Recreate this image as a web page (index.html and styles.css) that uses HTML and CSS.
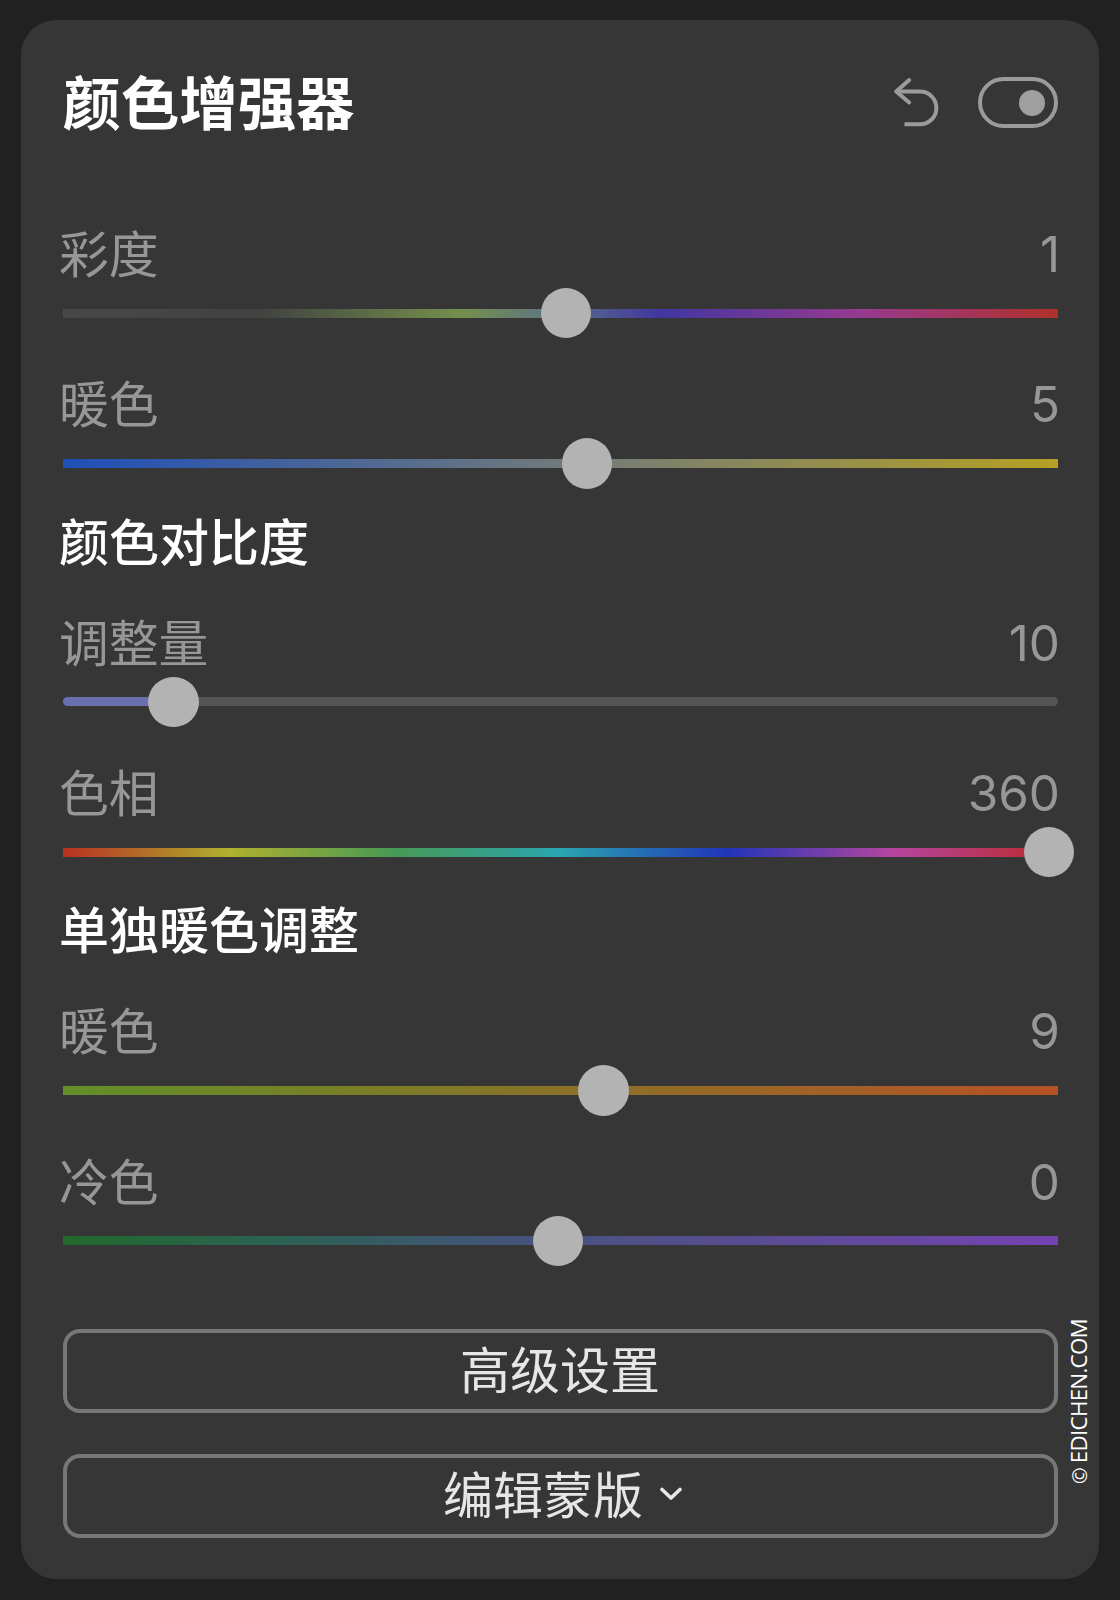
FILE: index.html
```html
<!DOCTYPE html>
<html lang="zh-CN">
<head>
<meta charset="utf-8">
<title>颜色增强器</title>
<link rel="stylesheet" href="styles.css">
</head>
<body>
<main class="panel">
  <header class="header">
    <h1 class="title">颜色增强器</h1>
    <div class="actions">
      <svg class="undo" width="48" height="52" viewBox="0 0 48 52" fill="none" stroke="#9b9b9b" stroke-width="4" stroke-linecap="round" stroke-linejoin="round"><path d="M17.2 3 4.2 14.5 17.2 25.5" /><path d="M5 14.5H28A16.4 16.4 0 0 1 28 47.3H12.5" stroke-linecap="butt"/></svg>
      <span class="toggle"><span class="toggle-dot"></span></span>
    </div>
  </header>

  <section class="sliders">
    <div class="slider">
      <div class="caption"><span class="name">彩度</span><span class="value">1</span></div>
      <div class="rail"><div class="track track-chroma"></div><span class="knob" style="left:50.6%"></span></div>
    </div>
    <div class="slider">
      <div class="caption"><span class="name">暖色</span><span class="value">5</span></div>
      <div class="rail"><div class="track track-warmth"></div><span class="knob" style="left:52.7%"></span></div>
    </div>
  </section>

  <h2 class="subtitle">颜色对比度</h2>
  <section class="sliders">
    <div class="slider">
      <div class="caption"><span class="name">调整量</span><span class="value">10</span></div>
      <div class="rail"><div class="track track-amount"></div><span class="knob" style="left:11.15%"></span></div>
    </div>
    <div class="slider">
      <div class="caption"><span class="name">色相</span><span class="value">360</span></div>
      <div class="rail"><div class="track track-hue"></div><span class="knob" style="left:99.15%"></span></div>
    </div>
  </section>

  <h2 class="subtitle">单独暖色调整</h2>
  <section class="sliders">
    <div class="slider">
      <div class="caption"><span class="name">暖色</span><span class="value">9</span></div>
      <div class="rail"><div class="track track-warm"></div><span class="knob" style="left:54.4%"></span></div>
    </div>
    <div class="slider">
      <div class="caption"><span class="name">冷色</span><span class="value">0</span></div>
      <div class="rail"><div class="track track-cool"></div><span class="knob" style="left:49.8%"></span></div>
    </div>
  </section>

  <div class="buttons">
    <button class="button">高级设置</button>
    <button class="button button-menu">编辑蒙版<svg class="chevron" width="24" height="16" viewBox="0 0 24 16" fill="none" stroke="#e6e6e6" stroke-width="3.7" stroke-linecap="round" stroke-linejoin="round"><path d="M3 3.5 12 12 21 3.5"/></svg></button>
  </div>
  <span class="watermark"><span class="copyright">©</span> EDICHEN.COM</span>
</main>
</body>
</html>
```
FILE: styles.css
```css
* { box-sizing: border-box; }

body {
  margin: 0;
  height: 1600px;
  padding: 20px 21px 21px;
  background: #212121;
  font-family: "Noto Sans CJK SC", sans-serif;
  overflow: hidden;
}

.panel {
  position: relative;
  height: 1559px;
  padding: 50px 41.5px 0;
  border-radius: 35px;
  background: #363636;
}

.header {
  display: flex;
  justify-content: space-between;
  align-items: center;
  height: 65px;
}

.title {
  margin: 0;
  padding-bottom: 5px;
  font-size: 58.4px;
  line-height: 60px;
  font-weight: 700;
  color: #fff;
}

.actions { display: flex; align-items: center; gap: 38px; }
.undo { display: block; }

.toggle {
  display: flex;
  align-items: center;
  justify-content: flex-end;
  width: 80px;
  height: 51px;
  padding-right: 9px;
  border: 4px solid #9b9b9b;
  border-radius: 26px;
}
.toggle-dot { width: 26px; height: 26px; border-radius: 50%; background: #9f9f9f; }

.sliders { display: flex; flex-direction: column; gap: 35.4px; }
.header + .sliders { margin-top: 88px; }

.caption {
  display: flex;
  justify-content: space-between;
  height: 60px;
  margin: 0 -2.5px 5px -3.5px;
  color: #979797;
}
.name { font-size: 49.8px; line-height: 56px; font-weight: 400; }
.value { font-family: Inter, sans-serif; font-size: 49.4px; line-height: 62px; font-weight: 400; }

.rail { position: relative; display: flex; align-items: center; height: 50px; }
.track { width: 100%; height: 9px; }
.knob {
  position: absolute;
  top: -0.2px;
  width: 50.6px;
  height: 50.6px;
  margin-left: -25.3px;
  border-radius: 50%;
  background: #b3b3b3;
}

.track-chroma { background: linear-gradient(90deg, #484848, #414340 20%, #75904d 40%, #5b7088 50%, #4136a0 60%, #973a90 80%, #b0302a); }
.track-warmth { background: linear-gradient(90deg, #1f4fb8, #707a7c 50%, #b5a024); }
.track-amount { border-radius: 5px; background: linear-gradient(90deg, #6a6fb0 11%, #535454 11%); }
.track-hue { background: linear-gradient(90deg, #b82f22, #b0b02e 16.7%, #479a55 33.3%, #2aa5b0 50%, #2035b8 66.7%, #b445a0 83.3%, #bc2a28); }
.track-warm { background: linear-gradient(90deg, #628f2a, #8a7228 50%, #b65224); }
.track-cool { background: linear-gradient(90deg, #22692c, #2a6350 20%, #44547a 45%, #7543b2); }

.subtitle {
  height: 60px;
  margin: 23.3px 0 40px -3.5px;
  font-size: 50px;
  line-height: 55px;
  font-weight: 500;
  color: #fff;
}

.buttons { display: flex; flex-direction: column; gap: 41px; margin-top: 63px; }
.button {
  display: flex;
  align-items: center;
  justify-content: center;
  height: 84px;
  padding: 0 0 8px;
  border: 4px solid #777;
  border-radius: 17px;
  background: transparent;
  font: 400 50px/60px "Noto Sans CJK SC", sans-serif;
  color: #e6e6e6;
}
.button-menu { padding-left: 6px; }
.chevron { margin: 5px 0 0 16px; }

.watermark {
  position: absolute;
  right: 4px;
  top: 1299px;
  writing-mode: vertical-rl;
  text-orientation: sideways;
  transform: rotate(180deg);
  font: 400 22.4px/30px "Open Sans", sans-serif;
  letter-spacing: -0.75px;
  color: #fff;
  white-space: nowrap;
}
.copyright { font-size: 20px; }
```
